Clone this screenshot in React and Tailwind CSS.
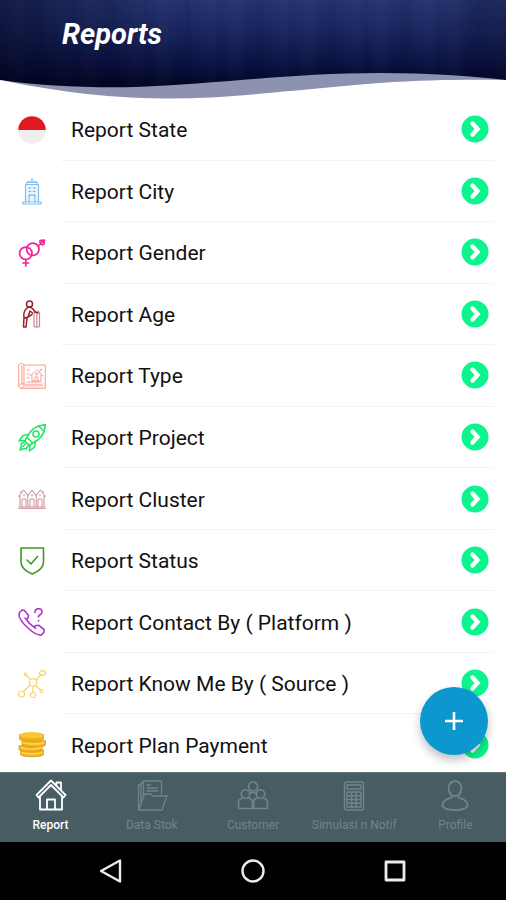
import React, { useState } from 'react';

const Svg = ({ children, className = 'w-7 h-7', box = '0 0 28 28', strokeWidth = 1.2 }) => (
  <svg
    className={className}
    viewBox={box}
    fill="none"
    stroke="currentColor"
    strokeWidth={strokeWidth}
    strokeLinecap="round"
    strokeLinejoin="round"
    aria-hidden="true"
  >
    {children}
  </svg>
);

const StateIcon = () => (
  <Svg>
    <g stroke="none">
      <path d="M0.2 14a13.8 13.8 0 0 1 27.6 0z" fill="#e0191f" />
      <path d="M0.2 14a13.8 13.8 0 0 0 27.6 0z" fill="#eeeeee" />
    </g>
  </Svg>
);

const CityIcon = () => (
  <Svg>
    <path d="M14 1v3M9 5.5c2-2 8-2 10 0M7.5 25V7.5h13V25M8.5 7.5l.5-2h10l.5 2" />
    <path d="M5 25h18v2H5zM11 25v-4c0-4 6-4 6 0v4" />
    <path d="M11 11h1.5M15.5 11H17M11 14.5h1.5M15.5 14.5H17M11 18h1.5M15.5 18H17" strokeWidth="1.6" />
    <path d="M7.5 7.5h13V25h-13z" fill="currentColor" fillOpacity=".15" stroke="none" />
  </Svg>
);

const GenderIcon = () => (
  <Svg strokeWidth={1.7}>
    <circle cx="7.8" cy="14.3" r="6.2" />
    <circle cx="14.8" cy="10.3" r="6.2" />
    <path d="M20.3 7L25.5 2.2M22 1.7l4.3-.5-.5 4.3M21.7 3.2l2.8 2.8" />
    <path d="M7.8 20.5V27M5 24h5.6" />
  </Svg>
);

const AgeIcon = () => (
  <Svg strokeWidth={1.5}>
    <circle cx="11.5" cy="4" r="3" />
    <path d="M8.5 8.5C6 11 5.5 14 6 17l-.5 10H8l1-9M8.5 8.5c2-2 5-1.5 6.5.5l2 3 3 1M14.5 13L12 11l-2 6-3.500 1M10 17l4-2.500" />
    <path d="M16 26V14c0-4 5.500-4 5.500 0v12c0 1.500-5.500 1.500-5.500 0zM18.800 13v14" strokeOpacity=".55" strokeWidth="1.2" />
  </Svg>
);

const TypeIcon = () => (
  <Svg strokeWidth={1}>
    <path d="M6 21h21v5H4z" fill="currentColor" fillOpacity=".2" stroke="none" />
    <path d="M.7 3.5c0-3 5.3-3 5.3 0V22H2.5C1.5 22 .7 22.5 .7 24M.7 3.5V24c0 3 5.3 3 5.3 0M2.5 26.3h24.8V3H6M4 3.5V22M6 23h18" />
    <path d="M9 8h2M9 12h2M9 16h2M9 20h14M12 14l6.5-6 6.500 6M14 13v6h9v-6M17 19v-4h3v4M22 10V7.500h2" />
    <circle cx="18.5" cy="12" r="1" />
  </Svg>
);

const ProjectIcon = () => (
  <Svg strokeWidth={1.5}>
    <path d="M27.3.7C19 1 13 4.5 9 13.5l5.5 5.5C23.5 15 27 9 27.3.7zM20.5 1.8l5.7 5.7" />
    <circle cx="18" cy="10" r="3" />
    <path d="M10.5 10.5L5 11.5 1 17l6-.5M17.5 17.5l-1 5.5-5 4 .5-6M8.5 13.5L7 17l4 4 3.5-1.5" />
    <path d="M7 17.5l-4 2.3.5 1.7L2 26l4.5-1.5L8 25l2.5-4M5 22.5l3-3" />
  </Svg>
);

const ClusterIcon = () => (
  <Svg strokeWidth={1.1}>
    <path d="M.7 11.5L5.5 5 10 10.5 14 5l4 5.5L22.5 5l4.8 6.5M2 10.5V22M9.8 10.5V22M18.2 10.5V22M26 10.5V22M1 22h26M1 23.5h26M3 6.5V9M25 6.5V9" />
    <path d="M4 22v-6c0-3 4-3 4 0v6M12 22v-6c0-3 4-3 4 0v6M20 22v-6c0-3 4-3 4 0v6M6 9.5V11M14 9.5V11M22 9.5V11" />
  </Svg>
);

const StatusIcon = () => (
  <Svg strokeWidth={1.6}>
    <path d="M3 1h22.5v14c0 6-5 9.5-11.3 12C8 24.5 3 21 3 15z" />
    <path d="M9 13l4 4 6.5-7.5" />
  </Svg>
);

const ContactIcon = () => (
  <Svg strokeWidth={1.6}>
    <path d="M1.5 4.5L4 2l2.5.5 4 5L10 10l-1.5 1.5c2 3.5 4 5.5 7.5 7.5l2-1.5 2.5-.3 5.5 4.300V24l-2.500 3c-3 .5-8-2-13-6.500S1.500 11 1 7.500zM8.500 11.500L7 10M16 19l1.500 1.500" />
    <path d="M17 4.5c0-5 7-5 7-.5 0 3-3.5 2.5-3.5 5M20.5 12.5v.5" />
  </Svg>
);

const SourceIcon = () => (
  <Svg strokeWidth={1.2}>
    <circle cx="15" cy="12.5" r="3.8" />
    <ellipse cx="24.5" cy="3" rx="3" ry="2.3" />
    <circle cx="3.5" cy="24" r="3" />
    <circle cx="15" cy="25" r="2.5" />
    <circle cx="7.5" cy="4.5" r="1.3" />
    <circle cx="23.5" cy="21" r="1.5" />
    <path d="M17.8 10l5-5M12.3 15.3l-6.800 6.200M15 16.500v6M12.500 9.500l-4-4M17.500 15.500l5 4.500" />
  </Svg>
);

const PaymentIcon = () => (
  <Svg strokeWidth={0.8}>
    <g fill="#efb01d" stroke="#dba01c">
      <path d="M2.5 19v4.5c0 3 23 3 23 0V19z" />
      <path d="M1 15v3.5c0 3 23 3 23 0V15z" />
      <path d="M4 10v4c0 3 23.5 3 23.5 0v-4z" />
      <path d="M1.5 4v4c0 3 24 3 24 0V4z" />
    </g>
    <path d="M1.5 4.5c0-4 24-4 24 0s-24 3-24 0z" fill="#fac832" stroke="#f6bf2b" />
    <path d="M5 11.5c4 2 17 2 21 0M3 16.5c4 2 16 2 20 0M4 21.5c4 2 16 2 20 0" stroke="#fdd64e" strokeWidth="1.4" />
  </Svg>
);

const ArrowIcon = () => (
  <svg className="w-7 h-7 shrink-0" viewBox="0 0 28 28" fill="none" aria-hidden="true">
    <circle cx="14" cy="14" r="13.5" fill="#0cf48e" />
    <path d="M11.5 8.5l5 5.5-5 5.5" stroke="#fff" strokeWidth="4.4" strokeLinecap="round" />
  </svg>
);

const HomeIcon = () => (
  <Svg className="w-8 h-8" box="0 0 32 32" strokeWidth={1.8}>
    <path d="M1.5 16L16 1.5 30.5 16l-2 2.5L16 6 3.5 18.5zM5 17.5v13h22v-13M21.5 7V3.5H26v8M12 30.500v-10h8v10" />
  </Svg>
);

const FolderIcon = () => (
  <Svg className="w-8 h-8" box="0 0 32 32" strokeWidth={1.3}>
    <path d="M2.5 31V6H5V3.5h2.5V2h18v13M5 6v20M7.5 4v15M2.5 31l6-16h6l2 2H31l-5 14z" />
    <path d="M11 6h3M11 9h10M11 12h11" />
  </Svg>
);

const PeopleIcon = () => (
  <Svg className="w-8 h-8" box="0 0 32 32" strokeWidth={1.6}>
    <circle cx="16" cy="7.5" r="4.5" />
    <circle cx="8.5" cy="15" r="4.2" />
    <circle cx="23.5" cy="15" r="4.2" />
    <path d="M1.5 29.500v-6c0-3 2-4 4-4.500M11.500 19c2.500.5 4 1.500 4 4.500v6H1.500M30.500 29.500v-6c0-3-2-4-4-4.500M20.500 19c-2.500.5-4 1.500-4 4.500v6h14M13 14.500c1.500-1.500 4.500-1.500 6 0" />
  </Svg>
);

const CalculatorIcon = () => (
  <Svg className="w-8 h-8" box="0 0 32 32" strokeWidth={1.4}>
    <rect x="6.5" y="3" width="19" height="28" rx="2" />
    <path d="M9 6h14v4H9zM9 13h14v15H9zM13.7 13v15M18.3 13v15M9 16.8h14M9 20.5h14M9 24.3h14" />
  </Svg>
);

const ProfileIcon = () => (
  <Svg className="w-8 h-8" box="0 0 32 32" strokeWidth={1.8}>
    <ellipse cx="16" cy="9.5" rx="6.5" ry="7.5" />
    <path d="M12.5 17v1.5C9 20 4 20.5 3.5 25.5 3 29 8 31 16 31s13-2 12.5-5.5C28 20.5 23 20 19.5 18.5V17" />
  </Svg>
);

const reports = [
  { label: 'Report State', icon: StateIcon, color: 'text-black' },
  { label: 'Report City', icon: CityIcon, color: 'text-[#7fc0f0]' },
  { label: 'Report Gender', icon: GenderIcon, color: 'text-[#f0249b]' },
  { label: 'Report Age', icon: AgeIcon, color: 'text-[#9c2128]' },
  { label: 'Report Type', icon: TypeIcon, color: 'text-[#fb9c92]' },
  { label: 'Report Project', icon: ProjectIcon, color: 'text-[#1fe564]' },
  { label: 'Report Cluster', icon: ClusterIcon, color: 'text-[#cf9a9c]' },
  { label: 'Report Status', icon: StatusIcon, color: 'text-[#3f9a24]' },
  { label: 'Report Contact By ( Platform )', icon: ContactIcon, color: 'text-[#ab35cf]' },
  { label: 'Report Know Me By ( Source )', icon: SourceIcon, color: 'text-[#fbd264]' },
  { label: 'Report Plan Payment', icon: PaymentIcon, color: 'text-[#f5b921]' },
];

const tabs = [
  { label: 'Report', icon: HomeIcon },
  { label: 'Data Stok', icon: FolderIcon },
  { label: 'Customer', icon: PeopleIcon },
  { label: 'Simulasi n Notif', icon: CalculatorIcon },
  { label: 'Profile', icon: ProfileIcon },
];

const Header = () => (
  <header className="relative h-[99px] shrink-0 overflow-hidden bg-[linear-gradient(90deg,rgba(0,0,20,0.45),transparent_35%,transparent_85%,rgba(0,0,20,0.25)),repeating-linear-gradient(90deg,transparent_0px,rgba(255,255,255,0.025)_17px,transparent_29px,rgba(0,0,30,0.08)_43px,transparent_45px,rgba(255,255,255,0.02)_66px,transparent_73px),linear-gradient(180deg,#243370,#17235b_35%,#0a1140_65%,#020424_88%)]">
    <h1 className="px-[62px] pt-4 text-[29px] leading-9 font-bold italic text-white">Reports</h1>
    <svg className="absolute inset-0 w-full h-full" viewBox="0 0 506 99" preserveAspectRatio="none" aria-hidden="true">
      <path d="M0 80C40 86 90 88 135 87C220 84 290 73 380 73C430 73 470 76 506 80V99H0z" fill="#8c92b0" />
      <path d="M0 80C50 90 100 98 165 98.5S300 89 380 83C430 79.5 470 79.5 506 80V99H0z" fill="#fff" />
    </svg>
  </header>
);

const ReportRow = ({ report }) => {
  const Icon = report.icon;
  return (
    <li className="flex flex-1 min-h-12">
      <a href="#report" className="flex flex-1 items-center pl-[18px] pr-3">
        <span className={`w-[43px] shrink-0 ${report.color}`}>
          <Icon />
        </span>
        <span className="flex flex-1 items-center justify-between self-stretch border-b border-[#f3f3f3] pl-[10px] pr-[5px]">
          <span className="pt-[2px] text-[21px] leading-7 text-[#111111]">{report.label}</span>
          <ArrowIcon />
        </span>
      </a>
    </li>
  );
};

const TabBar = () => {
  const [active, setActive] = useState('Report');

  return (
    <nav className="relative z-20 grid grid-cols-5 h-[70px] shrink-0 bg-[#475d63] border-t border-[#60757b]">
      {tabs.map(({ label, icon: Icon }) => (
        <button
          key={label}
          type="button"
          onClick={() => setActive(label)}
          className={`flex flex-col items-center gap-1 pt-[6px] text-[12px] leading-5 whitespace-nowrap ${
            active === label ? 'text-white font-medium' : 'text-[#6f858c]'
          }`}
        >
          <Icon />
          {label}
        </button>
      ))}
    </nav>
  );
};

const SystemBar = () => (
  <div className="grid grid-cols-3 h-[58px] shrink-0 items-center justify-items-center bg-black px-10 text-[#ececec]">
    <button type="button" aria-label="Back">
      <Svg className="w-6 h-6" box="0 0 24 24" strokeWidth={2.4}>
        <path d="M21 1.5v21L2 12z" />
      </Svg>
    </button>
    <button type="button" aria-label="Home">
      <Svg className="w-6 h-6" box="0 0 24 24" strokeWidth={2.4}>
        <circle cx="12" cy="12" r="10.5" />
      </Svg>
    </button>
    <button type="button" aria-label="Recent apps">
      <Svg className="w-6 h-6" box="0 0 24 24" strokeWidth={2.8}>
        <rect x="3" y="3" width="18" height="18" />
      </Svg>
    </button>
  </div>
);

const App = () => (
  <div className="flex flex-col min-h-screen bg-white font-['Roboto',sans-serif]">
    <Header />
    {/* the list runs slightly under the tab bar */}
    <main className="relative flex flex-1 flex-col -mb-1">
      <ul className="flex flex-1 flex-col">
        {reports.map((report) => (
          <ReportRow key={report.label} report={report} />
        ))}
      </ul>
      <button
        type="button"
        aria-label="Add report"
        className="absolute right-[18px] bottom-[21px] z-10 flex items-center justify-center w-[68px] h-[68px] rounded-full bg-[#0d97cf] text-white shadow-[0_5px_10px_rgba(0,0,0,0.25)]"
      >
        <svg className="w-5 h-5" viewBox="0 0 20 20" stroke="currentColor" strokeWidth="2.6" aria-hidden="true">
          <path d="M10 1v18M1 10h18" />
        </svg>
      </button>
    </main>
    <TabBar />
    <SystemBar />
  </div>
);

export default App;
